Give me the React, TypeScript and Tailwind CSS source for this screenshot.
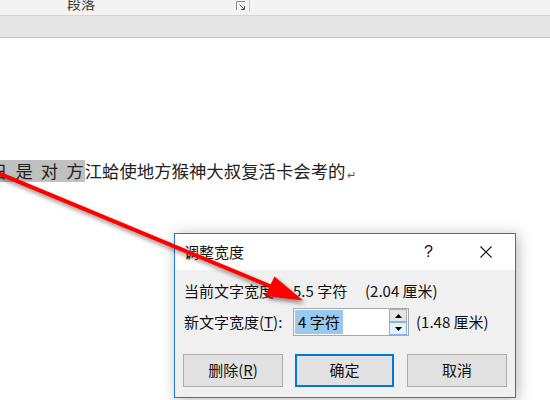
const cjk = { fontFamily: '"Noto Sans CJK SC", "Noto Sans", sans-serif' };

const Ribbon = () => (
  <>
    <div className="relative h-[16px] bg-[#f3f3f3] border-b border-[#d5d5d5] overflow-hidden">
      <span className="absolute left-[67px] top-[-7px] text-[14px] leading-[20px] text-[#333]">段落</span>
      <svg className="absolute left-[236px] top-[1px]" width="10" height="10" viewBox="0 0 10 10">
        <path d="M0.5 9V0.5H9" fill="none" stroke="#8a8a8a" strokeWidth="1" />
        <path d="M3.5 3.5L8.5 8.5M8.5 5V8.5H5" fill="none" stroke="#555" strokeWidth="1" />
      </svg>
      <div className="absolute left-[249px] top-0 h-[12px] w-px bg-[#c8c8c8]" />
    </div>
    <div className="h-[22px] bg-[#e6e6e6] border-b border-[#c6c6c6]" />
  </>
);

const DocLine = () => (
  <div className="mt-[122px] flex items-center h-[22px] text-[17.4px] leading-[22px] text-[#222]">
    <span className="flex h-[22px] gap-[8px] bg-[#c0c0c0] overflow-hidden pr-[1px]">
      <span className="ml-[-10px]">日</span>
      <span>是</span>
      <span>对</span>
      <span>方</span>
    </span>
    <span>江蛤使地方猴神大叔复活卡会考的</span>
    <span className="ml-[1px] mt-[6px] text-[11px] text-[#555]">↵</span>
  </div>
);

const Spin = () => (
  <div className="flex h-[28px] w-[116px] border border-[#a8a8a8] bg-white">
    <div className="flex-1 pl-[1px] pt-[1px]">
      <span className="inline-block h-[24px] bg-[#99c9ef] px-[3px] text-[15px] leading-[24px] text-black">4 字符</span>
    </div>
    <div className="flex w-[19px] flex-col pr-[1px]">
      <div className="flex h-[13px] items-center justify-center border border-[#adadad] bg-[#e5e5e5]">
        <svg width="7" height="4" viewBox="0 0 7 4"><path d="M3.5 0L7 4H0Z" fill="#000" /></svg>
      </div>
      <div className="flex h-[13px] items-center justify-center border border-[#7eb4ea] bg-[#e5f1fb]">
        <svg width="7" height="4" viewBox="0 0 7 4"><path d="M0 0H7L3.5 4Z" fill="#000" /></svg>
      </div>
    </div>
  </div>
);

const Dialog = () => (
  <div
    className="absolute left-[174px] top-[233px] w-[342px] h-[165px] border border-[#1c7ad0] bg-[#f0f0f0] shadow-[2px_2px_14px_rgba(0,0,0,0.28)] text-[15px] text-[#111]"
    style={cjk}
  >
    <div className="relative flex h-[36px] items-center bg-white pl-[9px]">
      <span className="leading-[20px]">调整宽度</span>
      <span className="absolute left-[249px] top-[9px] text-[16px] leading-[18px]" style={{ fontFamily: '"Liberation Sans", sans-serif' }}>?</span>
      <svg className="absolute left-[305px] top-[12px]" width="12" height="12" viewBox="0 0 12 12">
        <path d="M0.5 0.5L11.5 11.5M11.5 0.5L0.5 11.5" stroke="#111" strokeWidth="1.1" />
      </svg>
    </div>
    <div className="mt-[11px] flex h-[20px] items-center leading-[20px]">
      <span className="ml-[9px] w-[109px]">当前文字宽度:</span>
      <span className="w-[72px]">5.5 字符</span>
      <span>(2.04 厘米)</span>
    </div>
    <div className="mt-[7px] flex h-[28px] items-center leading-[20px]">
      <span className="ml-[9px] w-[109px]">
        新文字宽度(<span className="underline underline-offset-2">T</span>):
      </span>
      <Spin />
      <span className="ml-[7px]">(1.48 厘米)</span>
    </div>
    <div className="mt-[18px] flex pl-[8px]">
      <button className="h-[33px] w-[100px] border border-[#adadad] bg-[#e1e1e1]">
        删除(<span className="underline underline-offset-2">R</span>)
      </button>
      <button className="ml-[12px] h-[33px] w-[99px] border-2 border-[#0078d7] bg-[#e1e1e1]">确定</button>
      <button className="ml-[13px] h-[33px] w-[100px] border border-[#adadad] bg-[#e1e1e1]">取消</button>
    </div>
  </div>
);

const Arrow = () => (
  <svg className="absolute left-0 top-0 pointer-events-none" width="550" height="400" viewBox="0 0 550 400">
    <defs>
      <filter id="sh" x="-10%" y="-10%" width="130%" height="130%">
        <feDropShadow dx="2" dy="3" stdDeviation="2" floodColor="#000" floodOpacity="0.45" />
      </filter>
    </defs>
    <g filter="url(#sh)">
      <path d="M-10 169.8L272 287" stroke="#ff0000" strokeWidth="4" />
      <path d="M303 300.5L265 296L274.5 276.5Z" fill="#ff0000" />
    </g>
  </svg>
);

export default function App() {
  return (
    <div className="relative h-[400px] w-[550px] overflow-hidden bg-white" style={cjk}>
      <Ribbon />
      <DocLine />
      <Dialog />
      <Arrow />
    </div>
  );
}
